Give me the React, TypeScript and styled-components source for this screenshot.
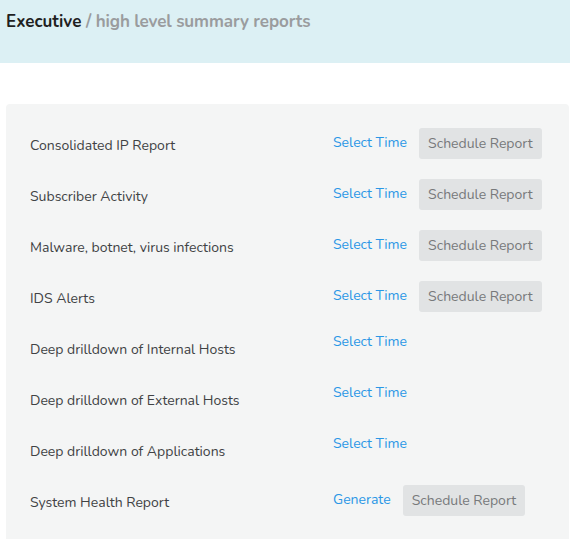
import React from "react";
import styled, { createGlobalStyle } from "styled-components";

const Global = createGlobalStyle`
  html, body { margin: 0; padding: 0; background: #ffffff; }
  body { font-family: "Nunito", "Lato", "Noto Sans", sans-serif; }
`;

const Page = styled.div`
  width: 570px;
  height: 539px;
  overflow: hidden;
`;

const Header = styled.header`
  height: 63px;
  background: #dcf0f4;
  padding: 9px 6px 0;
  box-sizing: border-box;
`;

const Title = styled.h1`
  margin: 0;
  font-size: 17px;
  line-height: 26px;
  font-weight: 700;
  color: #1f1f1f;
`;

const Sub = styled.span`
  color: #9a9c9e;
  letter-spacing: -0.1px;
`;

const Panel = styled.section`
  margin: 41px 0 0 6px;
  width: 563px;
  background: #f4f5f5;
  border-radius: 4px 4px 0 0;
  padding: 16px 24px;
  box-sizing: border-box;
  min-height: 480px;
`;

const Row = styled.div`
  display: grid;
  grid-template-columns: 303px 1fr;
  height: 51px;
`;

const Label = styled.div`
  align-self: center;
  font-size: 14px;
  line-height: 20px;
  color: #404244;
  padding-top: 1px;
`;

const Actions = styled.div`
  display: flex;
  align-items: center;
  align-self: start;
  gap: 12px;
  padding-top: 8px;
`;

const Link = styled.a`
  font-size: 14px;
  line-height: 24px;
  color: #2a97e6;
  cursor: pointer;
  margin-top: -2px;
`;

const Button = styled.button`
  height: 31px;
  padding: 0 9px;
  border: none;
  border-radius: 3px;
  background: #e1e3e4;
  color: #77797b;
  font-family: inherit;
  font-size: 14px;
`;

type Item = { label: string; action: string; schedule: boolean };

const items: Item[] = [
  { label: "Consolidated IP Report", action: "Select Time", schedule: true },
  { label: "Subscriber Activity", action: "Select Time", schedule: true },
  { label: "Malware, botnet, virus infections", action: "Select Time", schedule: true },
  { label: "IDS Alerts", action: "Select Time", schedule: true },
  { label: "Deep drilldown of Internal Hosts", action: "Select Time", schedule: false },
  { label: "Deep drilldown of External Hosts", action: "Select Time", schedule: false },
  { label: "Deep drilldown of Applications", action: "Select Time", schedule: false },
  { label: "System Health Report", action: "Generate", schedule: true },
];

export default function App() {
  return (
    <Page>
      <Global />
      <Header>
        <Title>
          Executive <Sub>/ high level summary reports</Sub>
        </Title>
      </Header>
      <Panel>
        {items.map((it) => (
          <Row key={it.label}>
            <Label>{it.label}</Label>
            <Actions>
              <Link>{it.action}</Link>
              {it.schedule && <Button>Schedule Report</Button>}
            </Actions>
          </Row>
        ))}
      </Panel>
    </Page>
  );
}
